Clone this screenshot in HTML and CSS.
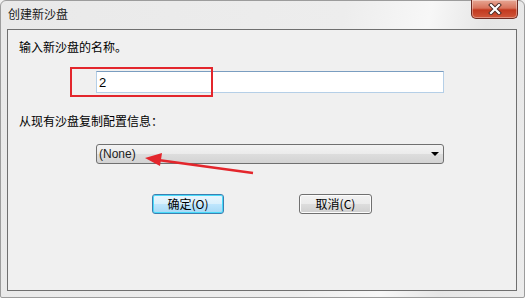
FILE: index.html
```html
<!DOCTYPE html>
<html lang="zh-CN">
<head>
    <meta charset="UTF-8">
    <title>创建新沙盘</title>
    <link rel="stylesheet" href="styles.css">
</head>
<body>
    <div class="window">
        <!-- Title bar -->
        <div class="titlebar">
            <span class="title">创建新沙盘</span>
            <button class="close" title="关闭">
                <svg width="16" height="12" viewBox="0 0 16 12">
                    <path d="M4 2 L12 10 M12 2 L4 10" stroke="#4a2a24" stroke-width="4" stroke-linecap="square"/>
                    <path d="M4 2 L12 10 M12 2 L4 10" stroke="#ffffff" stroke-width="2.2" stroke-linecap="square"/>
                </svg>
            </button>
        </div>

        <!-- Dialog body -->
        <div class="client">
            <div class="label">输入新沙盘的名称。</div>
            <div class="field">
                <input type="text" class="textbox" value="2">
            </div>

            <div class="label second">从现有沙盘复制配置信息：</div>
            <div class="field">
                <div class="combo">
                    <span>(None)</span>
                    <span class="arrow"></span>
                </div>
            </div>

            <div class="actions">
                <button class="btn default">确定(O)</button>
                <button class="btn">取消(C)</button>
            </div>
        </div>

        <!-- Red annotations over the dialog -->
        <div class="mark-box"></div>
        <svg class="mark-arrow" width="525" height="298" viewBox="0 0 525 298">
            <line x1="253" y1="173" x2="158" y2="160" stroke="#e3262c" stroke-width="2.5"/>
            <polygon points="145,158 162,153 160,166" fill="#e3262c"/>
        </svg>
    </div>
</body>
</html>
```

FILE: styles.css
```css
/* Page */
body {
    margin: 0;
    background-color: #f0f0f0;
    font-family: "Noto Sans CJK SC", "DejaVu Sans", sans-serif;
    font-size: 12px;
    color: #000;
}

/* Window frame */
.window {
    position: relative;
    width: 525px;
    height: 298px;
    box-sizing: border-box;
    border: 1px solid #9c9c9c;
    border-radius: 6px 6px 2px 2px;
    background: linear-gradient(100deg, #e9e9e9 0%, #ededed 60%, #f7f7f7 75%, #e6e6e6 85%, #ececec 100%);
    display: flex;
    flex-direction: column;
}

/* Title bar */
.titlebar {
    height: 28px;
    display: flex;
    align-items: flex-start;
    justify-content: space-between;
}

.title {
    margin: 5px 0 0 7px;
    line-height: 16px;
    color: #1a1a1a;
}

.close {
    width: 47px;
    height: 19px;
    margin: -1px 6px 0 0;
    padding: 0;
    border: 1px solid #6e2b22;
    border-top: none;
    border-radius: 0 0 5px 5px;
    background: linear-gradient(#e7a794 0%, #d8735c 45%, #c2391f 55%, #d0573a 100%);
    box-shadow: inset 0 0 0 1px rgba(255, 255, 255, 0.35);
    display: flex;
    justify-content: center;
    align-items: center;
}

/* Client area */
.client {
    flex: 1;
    margin: 0 7px 6px 6px;
    border: 1px solid #6f6f6f;
    background-color: #f0f0f0;
    padding-left: 11px;
}

.label {
    height: 16px;
    line-height: 16px;
    margin-top: 9px;
}

.label.second {
    margin-top: 20px;
}

.field {
    padding-left: 77px;
}

.textbox {
    display: block;
    width: 348px;
    height: 22px;
    margin-top: 16px;
    box-sizing: border-box;
    border: 1px solid #b5cfe7;
    border-top-color: #7a9dc0;
    padding: 0 2px;
    background-color: #fff;
    font-family: "Liberation Sans", sans-serif;
    font-size: 13px;
    color: #000;
}

/* Drop-down list */
.combo {
    width: 348px;
    height: 20px;
    margin-top: 15px;
    box-sizing: border-box;
    border: 1px solid #707070;
    border-radius: 3px;
    background: linear-gradient(#f3f3f3 0%, #ebebeb 50%, #dddddd 51%, #d3d3d3 100%);
    display: flex;
    align-items: center;
    justify-content: space-between;
    padding: 0 4px 0 2px;
    font-family: "Liberation Sans", sans-serif;
    font-size: 12px;
    color: #222;
}

.arrow {
    width: 0;
    height: 0;
    border-left: 4px solid transparent;
    border-right: 4px solid transparent;
    border-top: 4px solid #000;
}

/* Buttons */
.actions {
    display: flex;
    gap: 75px;
    margin-top: 30px;
    padding-left: 133px;
}

.btn {
    width: 73px;
    height: 20px;
    padding: 0;
    border: 1px solid #707070;
    border-radius: 3px;
    background: linear-gradient(#f2f2f2 0%, #ebebeb 50%, #dddddd 51%, #cfcfcf 100%);
    box-shadow: inset 0 0 0 1px #fcfcfc;
    font-family: "Noto Sans CJK SC", sans-serif;
    font-size: 12px;
    line-height: 16px;
    color: #000;
}

.btn.default {
    width: 72px;
    border-color: #3c7fb1;
    background: linear-gradient(#eaf6fd 0%, #d9f0fc 50%, #bee6fd 51%, #a7d9f5 100%);
    box-shadow: inset 0 0 0 1px #48dbfa;
}

/* Annotations */
.mark-box {
    position: absolute;
    left: 69px;
    top: 66px;
    width: 139px;
    height: 26px;
    border: 2px solid #e3262c;
}

.mark-arrow {
    position: absolute;
    left: -1px;
    top: -1px;
    pointer-events: none;
}
```
